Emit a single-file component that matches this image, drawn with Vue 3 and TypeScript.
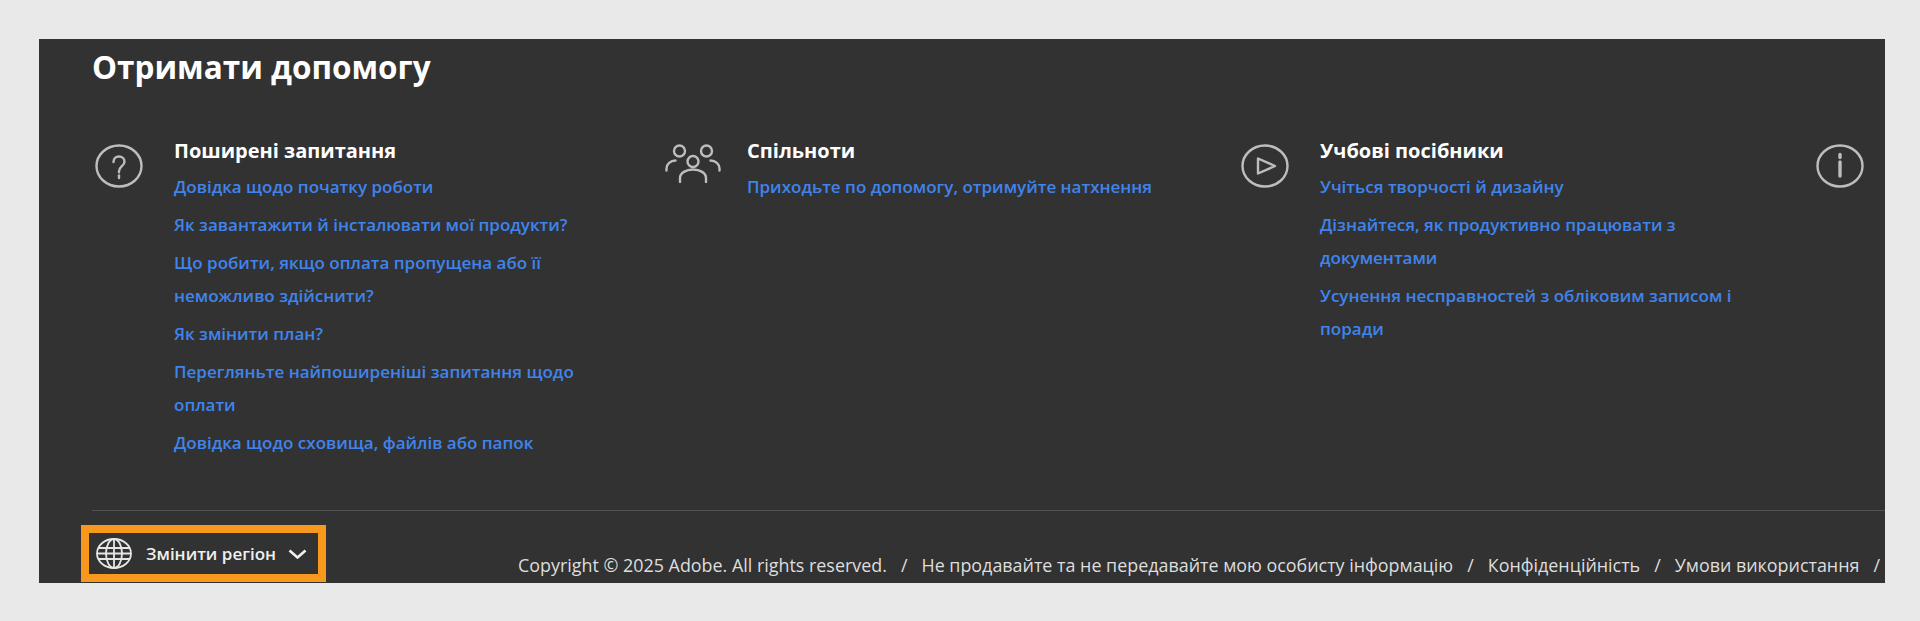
<script setup lang="ts">
interface HelpColumn {
  title: string
  icon: 'question' | 'people' | 'play'
  links: string[]
}

const columns: HelpColumn[] = [
  {
    title: 'Поширені запитання',
    icon: 'question',
    links: [
      'Довідка щодо початку роботи',
      'Як завантажити й інсталювати мої продукти?',
      'Що робити, якщо оплата пропущена або її неможливо здійснити?',
      'Як змінити план?',
      'Перегляньте найпоширеніші запитання щодо оплати',
      'Довідка щодо сховища, файлів або папок',
    ],
  },
  {
    title: 'Спільноти',
    icon: 'people',
    links: ['Приходьте по допомогу, отримуйте натхнення'],
  },
  {
    title: 'Учбові посібники',
    icon: 'play',
    links: [
      'Учіться творчості й дизайну',
      'Дізнайтеся, як продуктивно працювати з документами',
      'Усунення несправностей з обліковим записом і поради',
    ],
  },
]

const legal: string[] = [
  'Copyright © 2025 Adobe. All rights reserved.',
  'Не продавайте та не передавайте мою особисту інформацію',
  'Конфіденційність',
  'Умови використання',
]
</script>

<template>
  <div class="page">
    <footer class="panel">
      <h2 class="heading">Отримати допомогу</h2>
      <div class="columns">
        <section v-for="col in columns" :key="col.title" class="column">
          <div class="icon-cell">
            <svg class="icon" width="48" height="44" viewBox="0 0 48 44" v-if="col.icon === 'question'">
              <ellipse cx="24" cy="22" rx="22.5" ry="20.5" />
              <path d="M18.5 18c0-3.6 2.5-5.5 5.5-5.5s5.5 1.9 5.5 5.2c0 4.3-5.5 4.8-5.5 9.6v1" />
              <path d="M24 31.5v2.5" />
            </svg>
            <svg class="icon" width="56" height="39" viewBox="0 0 56 39" v-else-if="col.icon === 'people'">
              <ellipse cx="14.5" cy="7" rx="5.5" ry="5.5" />
              <ellipse cx="41.5" cy="7" rx="5.5" ry="5.5" />
              <ellipse cx="28" cy="17.5" rx="5.5" ry="5.5" />
              <path d="M1.5 26.5v-2c0-4.5 4-8 9-8" />
              <path d="M54.5 26.5v-2c0-4.5-4-8-9-8" />
              <path d="M15 38v-4c0-5 6-8.5 13-8.5s13 3.5 13 8.5v4" />
            </svg>
            <svg class="icon" width="48" height="44" viewBox="0 0 48 44" v-else>
              <ellipse cx="24" cy="22" rx="22.5" ry="20.5" />
              <path d="M17 14.5v15L34 22z" stroke-linejoin="round" />
            </svg>
          </div>
          <div class="column-body">
            <h3 class="column-title">{{ col.title }}</h3>
            <a v-for="link in col.links" :key="link" class="help-link" href="#">{{ link }}</a>
          </div>
        </section>
        <section class="column">
          <div class="icon-cell">
            <svg class="icon" width="48" height="44" viewBox="0 0 48 44">
              <ellipse cx="24" cy="22" rx="22.5" ry="20.5" />
              <path d="M24 10.5v3" stroke-width="3.4" />
              <path d="M24 18v14" stroke-width="3.4" />
            </svg>
          </div>
        </section>
      </div>
      <div class="rule"></div>
      <div class="bottom">
        <button class="region" type="button">
          <svg class="globe" width="36" height="31" viewBox="0 0 36 31">
            <ellipse cx="18" cy="15.5" rx="17" ry="14.5" />
            <ellipse cx="18" cy="15.5" rx="8" ry="14.5" />
            <path d="M18 1v29M2 10h32M1 15.5h34M2 21h32" />
          </svg>
          <span class="region-label">Змінити регіон</span>
          <svg class="chevron" width="19" height="10" viewBox="0 0 19 10">
            <path d="M1.5 1.5 9.5 8.5l8-7" />
          </svg>
        </button>
        <p class="legal">
          <template v-for="item in legal" :key="item">
            <span>{{ item }}</span><span class="slash">/</span>
          </template>
        </p>
      </div>
    </footer>
  </div>
</template>

<style scoped>
.page {
  height: 621px;
  box-sizing: border-box;
  padding: 39px 35px 38px 39px;
  background: #e9e9e9;
  font-family: "Open Sans", "Liberation Sans", sans-serif;
}
.panel {
  height: 100%;
  display: flex;
  flex-direction: column;
  background: #323232;
  overflow: hidden;
}
.heading {
  margin: 7px 0 0 53px;
  font-size: 31.5px;
  line-height: 42px;
  font-weight: 700;
  color: #fff;
}
.columns {
  display: grid;
  grid-template-columns: repeat(4, 573px);
  margin: 49px 0 0 53px;
  height: 373px;
}
.column {
  display: flex;
  align-items: flex-start;
}
.icon-cell {
  flex: 0 0 82px;
  padding-top: 7px;
}
.icon {
  display: block;
  fill: none;
  stroke: #bdbdbd;
  stroke-width: 2.4;
  stroke-linecap: round;
  margin-left: 3px;
}
.column:nth-child(2) .icon { margin-left: 0; }
.column:nth-child(4) .icon { margin-left: 5px; }
.column-body {
  width: 432px;
  display: flex;
  flex-direction: column;
}
.column-title {
  margin: 0 0 5px;
  font-size: 20px;
  line-height: 28px;
  font-weight: 700;
  color: #fff;
}
.help-link {
  display: block;
  margin-bottom: 5px;
  font-size: 17px;
  line-height: 33px;
  font-weight: 600;
  color: #3f84ec;
  text-decoration: none;
}
.rule {
  height: 1px;
  margin-left: 53px;
  background: #525252;
}
.bottom {
  display: flex;
  align-items: flex-end;
  margin-top: 14px;
  flex: 1;
}
.region {
  flex: none;
  display: flex;
  align-items: center;
  box-sizing: border-box;
  width: 245px;
  height: 57px;
  margin: 0 0 1px 42px;
  padding: 0 0 0 7px;
  border: 8px solid #f8991d;
  background: transparent;
  color: #f0f0f0;
  font: inherit;
}
.globe {
  flex: none;
  fill: none;
  stroke: #e6e6e6;
  stroke-width: 1.8;
}
.region-label {
  margin-left: 14px;
  font-size: 17px;
  font-weight: 600;
  white-space: nowrap;
}
.chevron {
  flex: none;
  margin-left: 12px;
  fill: none;
  stroke: #f0f0f0;
  stroke-width: 2.6;
}
.legal {
  margin: 0 0 6px 192px;
  font-size: 17.9px;
  line-height: 24px;
  font-weight: 500;
  color: #dedede;
  white-space: nowrap;
}
.slash {
  margin: 0 14px;
}
</style>

<style>
body {
  background: #e9e9e9;
}
</style>
